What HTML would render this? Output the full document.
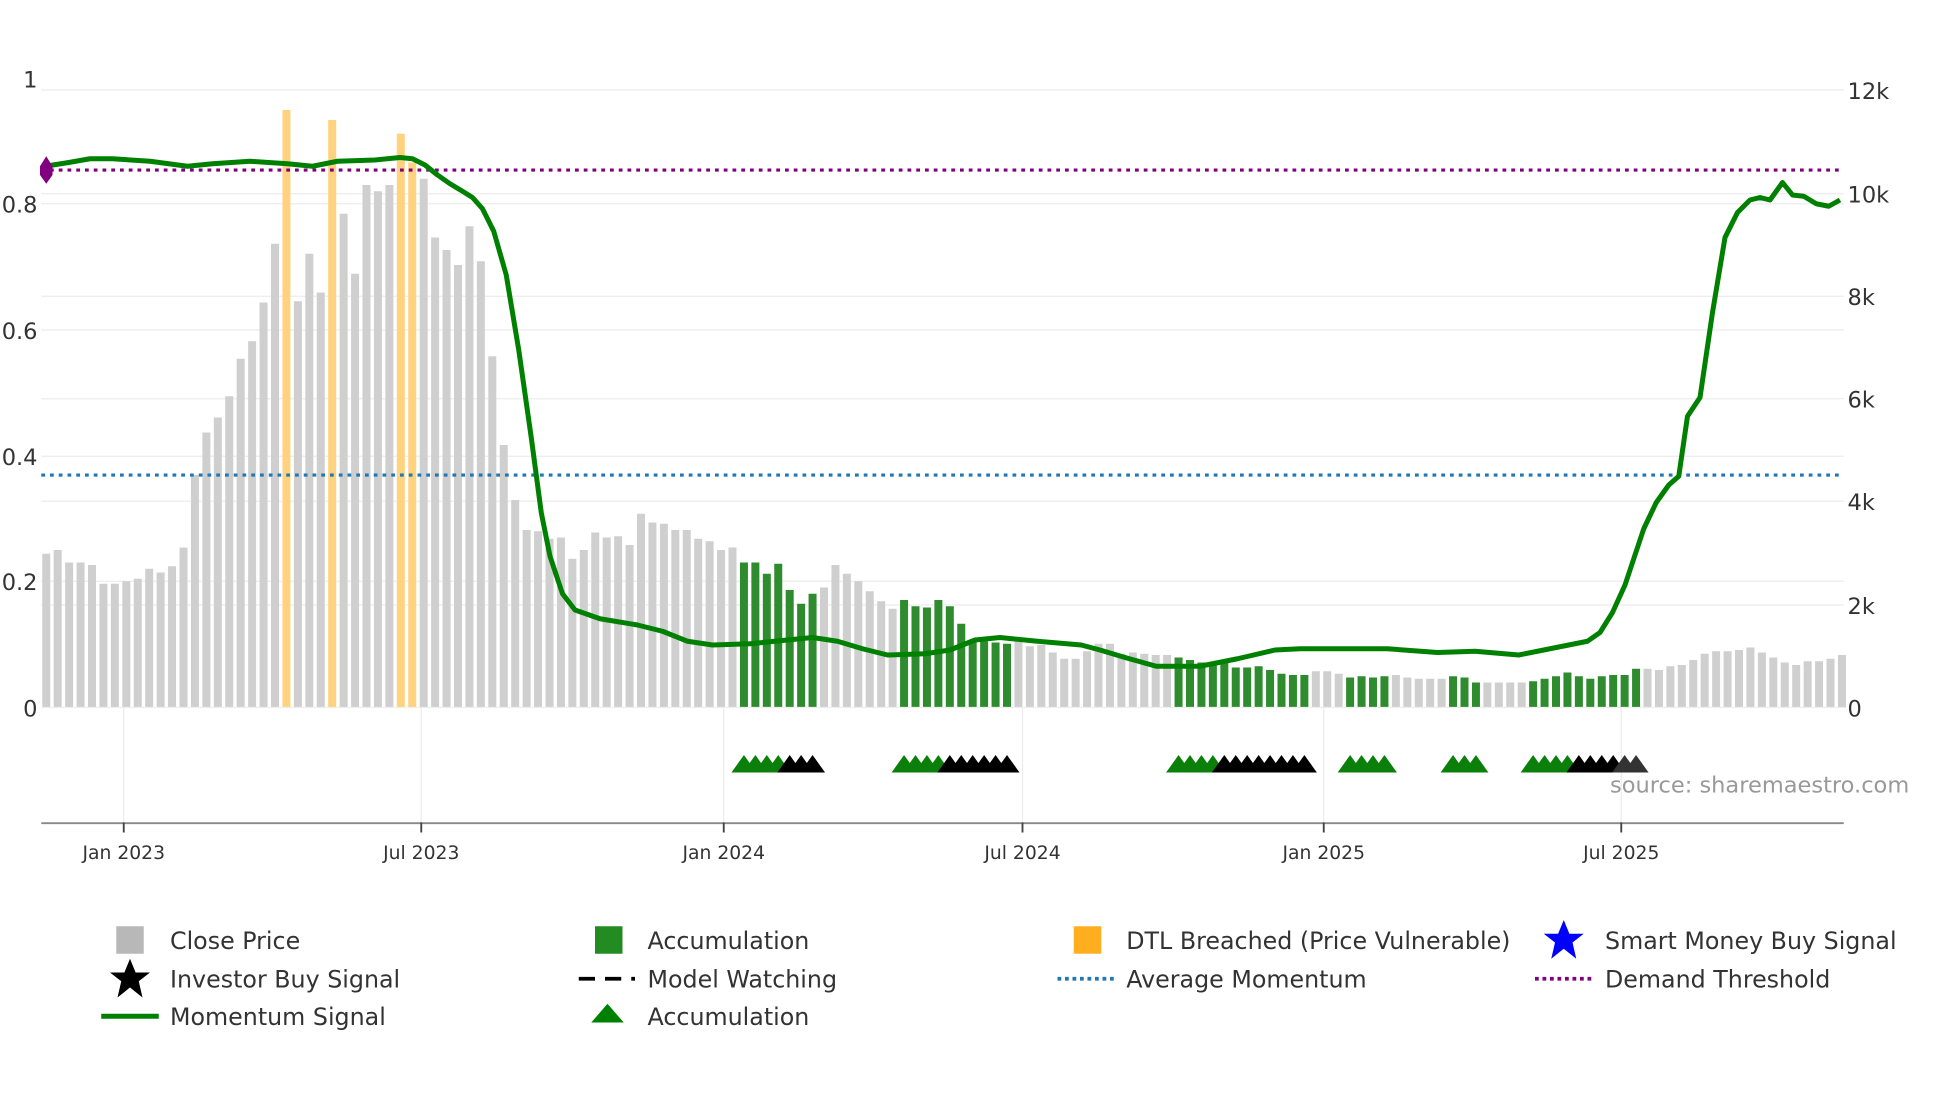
<!DOCTYPE html>
<html><head><meta charset="utf-8"><style>
html,body{margin:0;padding:0;background:#fff;width:1960px;height:1102px;overflow:hidden}
svg{display:block;font-family:"DejaVu Sans","Liberation Sans",sans-serif}
</style></head><body>
<svg id="s" width="1960" height="1102" viewBox="0 0 1568 881.6" xmlns="http://www.w3.org/2000/svg">
<g stroke="#ececec" stroke-width="1">
<line x1="33" x2="1475" y1="72" y2="72"/><line x1="33" x2="1475" y1="163" y2="163"/><line x1="33" x2="1475" y1="264" y2="264"/><line x1="33" x2="1475" y1="365" y2="365"/><line x1="33" x2="1475" y1="465" y2="465"/>
<line x1="33" x2="1475" y1="155" y2="155"/><line x1="33" x2="1475" y1="237" y2="237"/><line x1="33" x2="1475" y1="319" y2="319"/><line x1="33" x2="1475" y1="401" y2="401"/><line x1="33" x2="1475" y1="484" y2="484"/>
<line x1="99" x2="99" y1="566" y2="658"/><line x1="337" x2="337" y1="566" y2="658"/><line x1="579" x2="579" y1="566" y2="658"/><line x1="818" x2="818" y1="566" y2="658"/><line x1="1059" x2="1059" y1="566" y2="658"/><line x1="1297" x2="1297" y1="566" y2="658"/>
</g>
<g id="bars"></g>
<line x1="33" x2="1475" y1="566" y2="566" stroke="#eee"/>
<line x1="40" x2="1475" y1="136" y2="136" stroke="#800080" stroke-width="2.5" stroke-dasharray="3,4"/>
<line x1="33" x2="1475" y1="380" y2="380" stroke="#1f77b4" stroke-width="2.5" stroke-dasharray="3,4"/>
<polyline fill="none" stroke="#008000" stroke-width="4" stroke-linejoin="round" points="36,133 55,130 72,127 90,127 120,129 150,133 170,131 200,129 230,131 250,133 270,129 300,128 320,126 330,127 340,132 350,140 360,147 370,153 378,158 386,167 395,185 405,220 415,280 425,350 433,410 440,445 450,475 460,488 480,495 510,500 530,505 550,513 570,516 600,515 630,512 650,510 670,513 690,519 710,524 740,523 760,520 780,512 800,510 830,513 865,516 880,520 900,526 925,533 960,533 990,527 1020,520 1040,519 1110,519 1150,522 1180,521 1215,524 1235,520 1255,516 1270,513 1280,506 1290,490 1300,468 1315,423 1325,402 1335,388 1343,381 1350,333 1360,318 1370,250 1380,190 1390,170 1400,160 1408,158 1416,160 1426,146 1434,156 1443,157 1453,163 1463,165 1472,160"/>
<polygon points="37,125 42,133 42,140 37,147 32,140 32,133" fill="#800080"/>
<g id="tri"></g>
<line x1="33" x2="1475" y1="658.5" y2="658.5" stroke="#888" stroke-width="1.5"/>
<g stroke="#444" stroke-width="1.5"><line x1="99" x2="99" y1="658" y2="666"/><line x1="337" x2="337" y1="658" y2="666"/><line x1="579" x2="579" y1="658" y2="666"/><line x1="818" x2="818" y1="658" y2="666"/><line x1="1059" x2="1059" y1="658" y2="666"/><line x1="1297" x2="1297" y1="658" y2="666"/></g>
<g font-size="15" fill="#333" text-anchor="middle">
<text x="99" y="687">Jan 2023</text><text x="337" y="687">Jul 2023</text><text x="579" y="687">Jan 2024</text><text x="818" y="687">Jul 2024</text><text x="1059" y="687">Jan 2025</text><text x="1297" y="687">Jul 2025</text>
</g>
<g font-size="18" fill="#333" text-anchor="end">
<text x="30" y="70">1</text><text x="30" y="170">0.8</text><text x="30" y="271">0.6</text><text x="30" y="372">0.4</text><text x="30" y="472">0.2</text><text x="30" y="573">0</text>
</g>
<g font-size="18" fill="#333">
<text x="1478" y="79">12k</text><text x="1478" y="162">10k</text><text x="1478" y="244">8k</text><text x="1478" y="326">6k</text><text x="1478" y="408">4k</text><text x="1478" y="491">2k</text><text x="1478" y="573">0</text>
</g>
<text x="1288" y="634" font-size="18" fill="#999">source: sharemaestro.com</text>
<g font-size="19" fill="#333">
<rect x="93" y="741" width="22" height="22" fill="#b8b8b8"/><text x="136" y="759">Close Price</text>
<rect x="476" y="741" width="22" height="22" fill="#228b22"/><text x="518" y="759">Accumulation</text>
<rect x="859" y="741" width="22" height="22" fill="#ffae1f"/><text x="901" y="759">DTL Breached (Price Vulnerable)</text>
<polygon points="1251,736 1255.5,747 1267,747 1258,754 1261,767 1251,759 1241,767 1244,754 1235,747 1246.5,747" fill="#0000ff"/><text x="1284" y="759">Smart Money Buy Signal</text>
<polygon points="104,767 108.5,778 120,778 111,785 114,798 104,790 94,798 97,785 88,778 99.5,778" fill="#000"/><text x="136" y="790">Investor Buy Signal</text>
<line x1="463" x2="508" y1="783" y2="783" stroke="#000" stroke-width="3" stroke-dasharray="13,8"/><text x="518" y="790">Model Watching</text>
<line x1="846" x2="891" y1="783" y2="783" stroke="#1f77b4" stroke-width="3" stroke-dasharray="3,3"/><text x="901" y="790">Average Momentum</text>
<line x1="1228" x2="1273" y1="783" y2="783" stroke="#800080" stroke-width="3" stroke-dasharray="3,3"/><text x="1284" y="790">Demand Threshold</text>
<line x1="81" x2="127" y1="813" y2="813" stroke="#008000" stroke-width="4"/><text x="136" y="820">Momentum Signal</text>
<polygon points="486,803 499,818 473,818" fill="#008000"/><text x="518" y="820">Accumulation</text>
</g>
</svg>
<script>
var tops=[443,440,450,450,452,467,467,465,463,455,458,453,438,380,346,334,317,287,273,242,195,88,241,203,234,96,171,219,148,153,148,107,130,143,190,200,212,181,209,285,356,400,424,425,431,430,447,440,426,430,429,436,411,418,419,424,424,431,433,440,438,450,450,459,451,472,483,475,470,452,459,465,473,481,487,480,485,486,480,485,499,512,513,514,515,512,517,516,522,527,527,521,515,515,523,522,523,524,524,526,528,530,530,529,534,534,533,536,539,540,540,537,537,539,542,541,542,541,540,542,543,543,543,541,542,546,546,546,546,546,545,543,541,538,541,543,541,540,540,535,535,536,533,532,528,523,521,521,520,518,522,526,530,532,529,529,527,524];
var orange={21:1,25:1,31:1,32:1};
function isG(i){return (i>=61&&i<=67)||(i>=75&&i<=84)||(i>=99&&i<=110)||(i>=114&&i<=117)||(i>=123&&i<=125)||(i>=130&&i<=139);}
var h='';
for(var i=0;i<tops.length;i++){var x=37+i*9.15;var c=orange[i]?'#ffd27f':(isG(i)?'#2e8b2e':'#cfcfcf');
h+='<rect x="'+(x-3.2)+'" y="'+tops[i]+'" width="6.4" height="'+(566-tops[i])+'" fill="'+c+'"/>';}
document.getElementById('bars').innerHTML=h;
var groups=[[61,64,'#0a7f0a'],[65,67,'#000'],[75,78,'#0a7f0a'],[79,84,'#000'],[99,102,'#0a7f0a'],[103,110,'#000'],[114,117,'#0a7f0a'],[123,125,'#0a7f0a'],[130,133,'#0a7f0a'],[134,137,'#000'],[138,139,'#333']];
var t='';
groups.forEach(function(g){for(var i=g[0];i<=g[1];i++){var x=37+i*9.15;t+='<polygon points="'+(x-10)+',618 '+x+',604 '+(x+10)+',618" fill="'+g[2]+'"/>';}});
document.getElementById('tri').innerHTML=t;
</script>
</body></html>
